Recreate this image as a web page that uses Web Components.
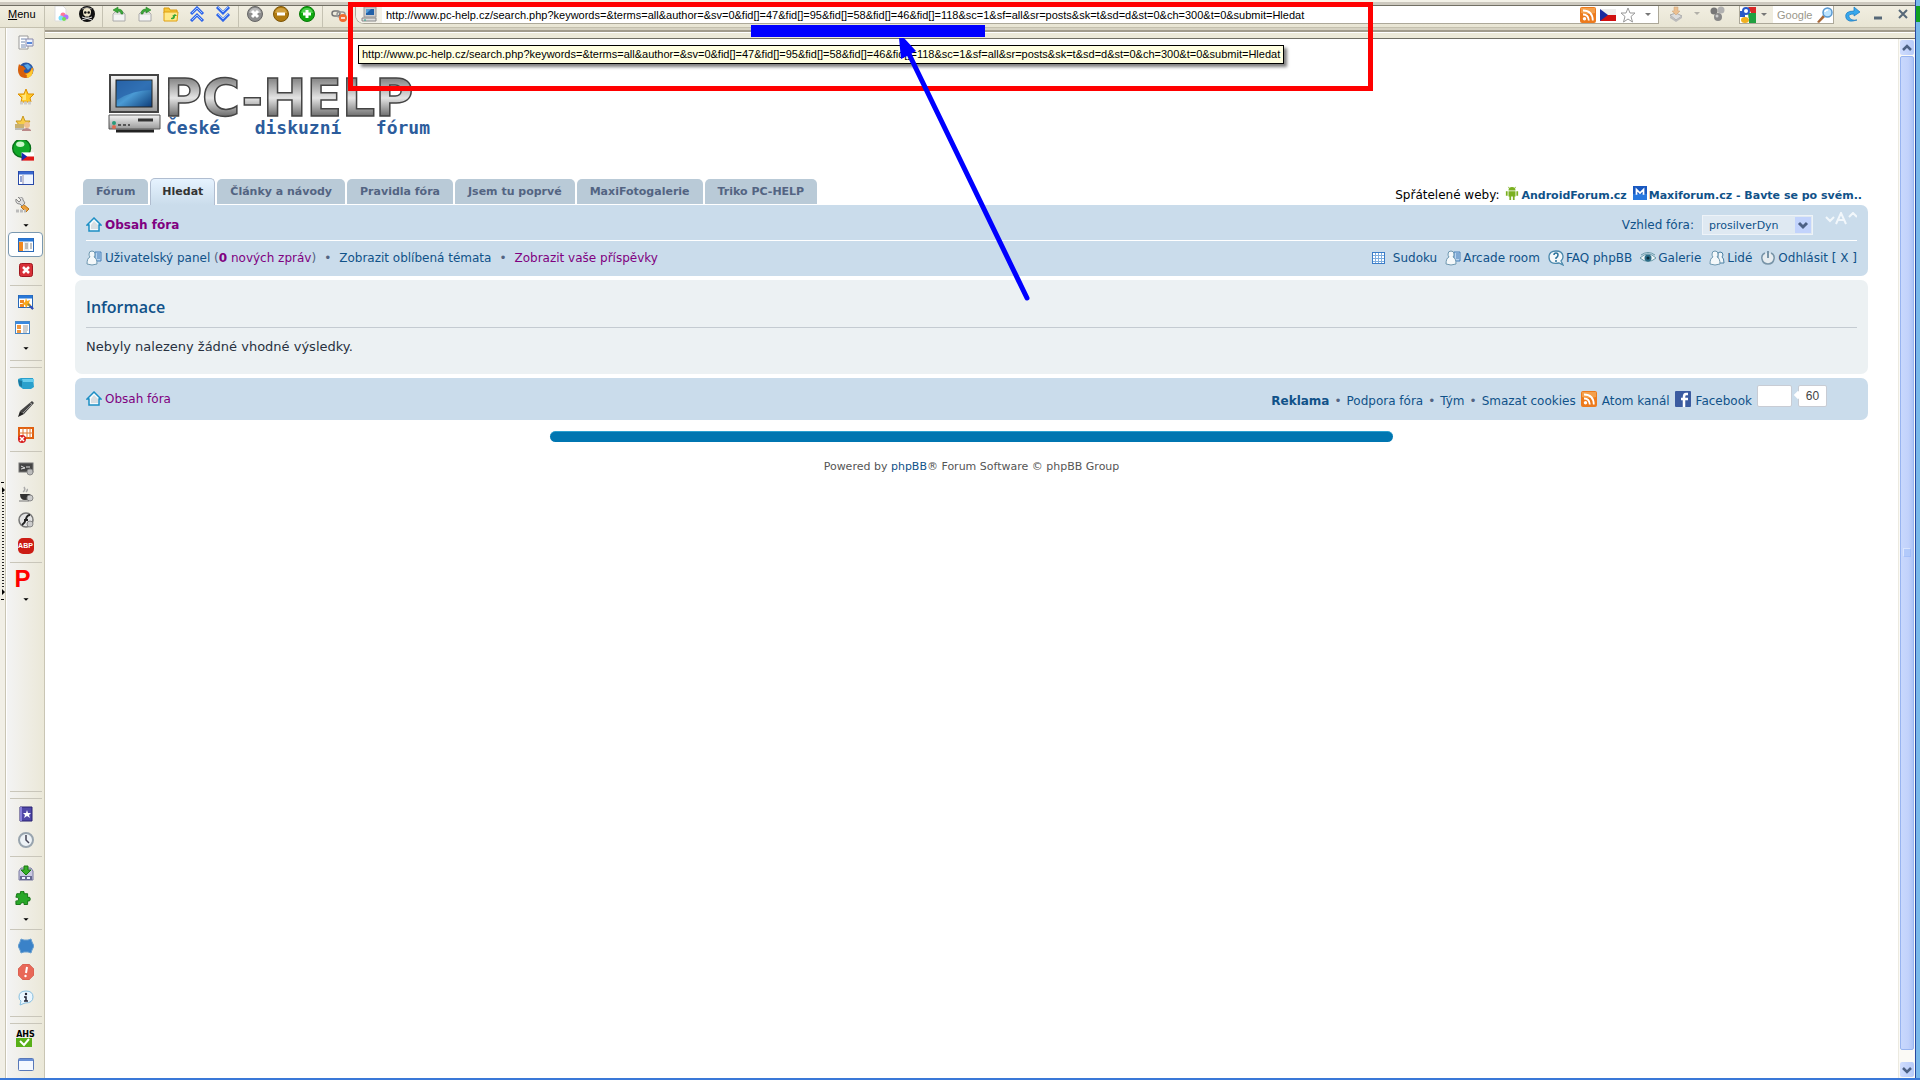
<!DOCTYPE html>
<html lang="cs">
<head>
<meta charset="utf-8">
<title>PC-HELP - Hledat</title>
<style>
  html, body {
    margin: 0;
    background: #fff;
  }

  body {
    font-family: "DejaVu Sans", Verdana, sans-serif;
    font-size: 12px;
    color: #536482;
  }
</style>
</head>
<body>
<browser-window></browser-window>

<script>
/**
 * Icon drawings, all on a 16 x 16 grid.
 */
const ICONS = {
  newpage: '<path d="M2 0h8l3 3v12H2z" fill="#fff" stroke="#ddd"/><circle cx="10" cy="9" r="2.500" fill="#f79"/><circle cx="8" cy="12" r="2.500" fill="#7df"/><circle cx="13" cy="11" r="2.500" fill="#a7f"/><circle cx="11" cy="13" r="2" fill="#7d5"/>',
  skull: '<circle cx="8" cy="8" r="8" fill="#111"/><path d="M3 3q5-3 10 0" stroke="#888" fill="none"/><path d="M4 6q0-4 4-4t4 4q0 3-2 4v2H6v-2Q4 9 4 6z" fill="#eee7cc"/><circle cx="6.300" cy="6.500" r="1.300" fill="#111"/><circle cx="9.700" cy="6.500" r="1.300" fill="#111"/><path d="M7 10v2M9 10v2" stroke="#111"/><path d="M3 11l10 3M13 11L3 14" stroke="#ddd"/>',
  trayleft: '<path d="M2 8l2-2h8l2 2v7H2z" fill="#f4f4f4" stroke="#aaa"/><path d="M3 8h10" stroke="#ccc"/><path d="M12 8Q12 3 7 3V1L2 4l5 3V5q3 0 3 3z" fill="#3aa83a" stroke="#1d7a1d" stroke-width=".5"/>',
  trayright: '<path d="M2 8l2-2h8l2 2v7H2z" fill="#f4f4f4" stroke="#aaa"/><path d="M3 8h10" stroke="#ccc"/><path d="M4 8Q4 3 9 3V1l5 3-5 3V5Q6 5 6 8z" fill="#3aa83a" stroke="#1d7a1d" stroke-width=".5"/>',
  folder: '<path d="M1 2h5l1 2h7v3H1z" fill="#f5c63a" stroke="#d99a10"/><path d="M1 6h14l-1 9H1z" fill="#ffe98a" stroke="#e0a010"/><path d="M8 13q4 1 4-3h2l-2-2-3 2h1q0 2-2 2z" fill="#38a838"/>',
  chevup: '<path d="M2 8l6-6 6 6M2 15l6-6 6 6" fill="none" stroke="#2f66ea" stroke-width="3"/><path d="M3 7l5-5 5 5M3 14l5-5 5 5" fill="none" stroke="#9cc2ff"/>',
  chevdown: '<path d="M2 1l6 6 6-6M2 8l6 6 6-6" fill="none" stroke="#2f66ea" stroke-width="3"/><path d="M3 1l5 5 5-5M3 8l5 5 5-5" fill="none" stroke="#9cc2ff"/>',
  stop: '<circle cx="8" cy="8" r="7.500" fill="#8d8d8d" stroke="#666"/><path d="M2 7Q3 2 8 2t6 5" fill="#bbb"/><path d="M5 5l6 6M11 5l-6 6" stroke="#fff" stroke-width="3"/>',
  minus: '<circle cx="8" cy="8" r="7.500" fill="#b07a10" stroke="#7c5508"/><path d="M2 7Q3 2 8 2t6 5" fill="#d0a040"/><path d="M4 8h8" stroke="#fff" stroke-width="3"/>',
  plus: '<circle cx="8" cy="8" r="7.500" fill="#10a810" stroke="#087808"/><path d="M2 7Q3 2 8 2t6 5" fill="#4fd04f"/><path d="M4 8h8M8 4v8" stroke="#fff" stroke-width="3"/>',
  link: '<rect x="1" y="5" width="8" height="5" rx="2.500" fill="none" stroke="#777" stroke-width="1.500"/><rect x="6" y="6" width="8" height="5" rx="2.500" fill="none" stroke="#999" stroke-width="1.500"/><circle cx="12" cy="12" r="4" fill="#f06a30"/><path d="M10 12h4" stroke="#fff" stroke-width="1.500"/>',
  computer: '<rect x="3" y="0" width="12" height="10" fill="#ccc" stroke="#999"/><rect x="5" y="2" width="8" height="6" fill="#2060a8"/><path d="M5 2h5L6 6H5z" fill="#58a0d8"/><path d="M1 11h14v3H1z" fill="#ddd" stroke="#888"/><path d="M3 13h2" stroke="#2a8"/>',
  rss: '<rect width="16" height="16" rx="2" fill="#ec7a1c"/><path d="M1 1h14v5Q8 8 1 6z" fill="#f4a04c"/><circle cx="4.500" cy="11.800" r="1.700" fill="#fff"/><path d="M3 7.500q5.500 0 5.800 6M3 3.500q9.500 0 9.800 10" stroke="#fff" stroke-width="1.800" fill="none"/>',
  flag: '<path d="M0 2h16v6H0z" fill="#eee"/><path d="M0 8h16v6H0z" fill="#d01010"/><path d="M0 2l8 6-8 6z" fill="#1a2aa0"/>',
  star: '<path d="M8 1l2 5h5l-4 3.500 1.500 5.500L8 12l-4.500 3L5 9.500 1 6h5z" fill="#fff" stroke="#999"/>',
  goldstar: '<path d="M8 0l2 5h6l-4 4 1 4H3l1-4-4-4h6z" fill="#ffc928" stroke="#dc8e00"/><path d="M8 2v9H4l1-3-2-2h4z" fill="#ffe680"/><path d="M2 14h12" stroke="#ccc" stroke-width="3" stroke-dasharray="3 1"/>',
  starman: '<path d="M8 0l2 5h5l-3 4H4L1 5h5z" fill="#f8cc48" stroke="#c89820"/><path d="M0 8h9v4H0z" fill="#c8b070"/><circle cx="12" cy="9" r="3" fill="#f0c090"/><path d="M7 14q5-4 9 0v1H7z" fill="#b88"/><path d="M0 13h9" stroke="#888"/>',
  pages: '<path d="M1 1h9v13H1z" fill="#fff" stroke="#999"/><path d="M3 4h5M3 7h4M3 10h4M3 12h5" stroke="#7088b0"/><path d="M8 4h7v7H8z" fill="#eef4ff" stroke="#88a"/><path d="M9 7h5v2H9z" fill="#5a88d8"/>',
  fox: '<circle cx="8" cy="8" r="7.500" fill="#2858a8"/><path d="M6 3l4-1 3 3-3 3z" fill="#58a8e8"/><path d="M1 2q1 2 4 2l3 3q-3 1-2 3 2 2 5 0l3-4q2-1 1 3-1 7-8 7Q0 15 0 8 0 5 1 2z" fill="#d8600c"/><path d="M7 12q6 0 7-7 3 8-4 11-2-1-1-3z" fill="#ffc830"/>',
  globe: '<circle cx="7" cy="6" r="6.500" fill="#10a828" stroke="#087018"/><ellipse cx="6" cy="3" rx="3" ry="2" fill="#c8f8c8"/><path d="M7 9h9v3H7z" fill="#fff"/><path d="M7 12h9v3H7z" fill="#e01818"/><path d="M7 9l4 3-4 3z" fill="#1828b0"/>',
  panel: '<rect x=".5" y="1.500" width="15" height="13" fill="#fff" stroke="#2848a8"/><path d="M1 3h14" stroke="#3868d0" stroke-width="3"/><path d="M5 5v9" stroke="#88a"/><path d="M2 7h2M2 9h2M2 11h2" stroke="#2848a8"/><path d="M6 5h9v9H6z" fill="#eef4ff"/>',
  wrench: '<path d="M8 7l6 5-3 3-5-5z" fill="#eda03a" stroke="#b87010"/><path d="M1 2l3 3 2-2-3-3q5-1 5 3l2 3-3 3-2-2q-5 0-4-5z" fill="#ddd" stroke="#888"/><path d="M1 14h10" stroke="#bbb" stroke-width="3" stroke-dasharray="3 1"/>',
  layout: '<rect x=".5" y="1.500" width="15" height="13" fill="#fff" stroke="#2868b8"/><path d="M1 3h14" stroke="#2878d8" stroke-width="3"/><path d="M1 5h4v9H1z" fill="#f08820"/><path d="M6 5h5v9H6z" fill="#eee"/><path d="M7 7h3M7 9h3M7 11h3M12 7h2M12 9h2M12 11h2" stroke="#888"/>',
  redx: '<rect x="1.500" y="1.500" width="13" height="13" rx="2" fill="#d83038" stroke="#a01820"/><path d="M5 5l6 6M11 5l-6 6" stroke="#fff" stroke-width="2.500"/>',
  magic: '<rect x=".5" y="1.500" width="14" height="12" fill="#fff" stroke="#2868b8"/><path d="M1 3h13" stroke="#2878d8" stroke-width="3"/><path d="M2 6h4v3H2zM2 10h4v3H2z" fill="#f08820"/><path d="M8 4l1 3 3-1-1 3 2 2-3 0-2 3-1-3-3-1 3-2z" fill="#f8a818"/><path d="M10 10l5 5" stroke="#884" stroke-width="2"/><path d="M12 12l3 3" stroke="#2848c8" stroke-width="2"/>',
  window: '<rect x=".5" y="1.500" width="14" height="12" fill="#fff" stroke="#4888c8"/><path d="M1 3h13" stroke="#3888e0" stroke-width="2"/><path d="M2 5h4v4H2zM2 10h4v3H2z" fill="#f09840"/><path d="M8 6h5M8 8h5M8 10h5M8 12h4" stroke="#999"/>',
  tag: '<path d="M0 4l3-1 12 0 1 9-3 2H5L1 11z" fill="#2aa0cc"/><path d="M4 4h12v3H5z" fill="#68ccec"/><path d="M0 5l4 1v6l-3-2z" fill="#1878a0"/>',
  pen: '<path d="M14 0l2 2L6 13l-4-3z" fill="#444"/><path d="M12 2l2 1L5 12" stroke="#999" fill="none"/><path d="M2 10l4 3-6 3z" fill="#222"/>',
  grid: '<rect x="1" y="1" width="14" height="10" fill="#fff" stroke="#e06010" stroke-width="2"/><path d="M1 6h14M5 1v10M9 1v10M12 1v10" stroke="#e07830"/><circle cx="4" cy="12" r="4" fill="#d82020"/><path d="M2 10l4 4M6 10l-4 4" stroke="#fff" stroke-width="1.500"/>',
  screen: '<rect x="1" y="3" width="14" height="9" fill="#444" stroke="#777"/><path d="M3 6l4 2-4 1M8 7h4" stroke="#ddd" fill="none"/><circle cx="12" cy="12" r="3" fill="#bbb" stroke="#888"/>',
  coffee: '<path d="M2 8h10q0 6-5 6T2 8z" fill="#333"/><path d="M12 9q3 0 1 3" stroke="#555" fill="none"/><path d="M5 6q3-2 1-5M8 6q2-2 1-3" stroke="#aaa" fill="none" stroke-width="1.500"/><circle cx="12" cy="12" r="3" fill="#ccc" stroke="#888"/><path d="M1 15h10" stroke="#777"/>',
  flash: '<circle cx="8" cy="8" r="7" fill="#e4e4e4" stroke="#777" stroke-width="1.500"/><path d="M12 3q-3 0-4 4t-4 6M6 8h4" stroke="#222" stroke-width="2" fill="none"/><circle cx="12" cy="12" r="3" fill="#ccc" stroke="#888"/>',
  google: '<rect width="16" height="16" fill="#fff"/><path d="M8 0h8v6h-5z" fill="#d82828"/><path d="M8 6h8v10H9z" fill="#20a040"/><path d="M0 4h5v6H0z" fill="#2858c8"/><path d="M2 11h7v5H2z" fill="#fff"/><circle cx="6" cy="4" r="3" fill="#fff" stroke="#2858c8" stroke-width="2"/><ellipse cx="5" cy="13" rx="4" ry="3" fill="#f0b020"/>',
  magnifier: '<path d="M0 15l6-7 2 2-6 6z" fill="#a86838"/><circle cx="10.500" cy="5.500" r="4.500" fill="#bce4ff" stroke="#5898d0" stroke-width="1.500"/><path d="M8 5q0-2 3-2" stroke="#fff" stroke-width="1.500" fill="none"/>',
  reload: '<path d="M13 14Q4 17 2 12 0 5 10 5V1l6 5-6 4V8Q4 8 5 11q2 4 8 3z" fill="#38a8ec" stroke="#1878c0" stroke-width=".7"/>',
  min: '<path d="M4 12h8" stroke="#566878" stroke-width="3"/>',
  close: '<path d="M4 4l8 8M12 4l-8 8" stroke="#566878" stroke-width="2"/>',
  stamp: '<path d="M2 9l6-2 6 3-6 4z" fill="#ddd" stroke="#aaa"/><path d="M2 10v2l6 4 6-4v-2l-6 4z" fill="#bbb"/><path d="M6 1h4v4h2L8 9 4 5h2z" fill="#ecc090" stroke="#c8a078" stroke-width=".5"/>',
  balls: '<circle cx="5" cy="5" r="3.500" fill="#777"/><circle cx="12" cy="4" r="3.500" fill="#b0b0b0"/><circle cx="9" cy="11" r="4" fill="#888"/><circle cx="8" cy="10" r="1.500" fill="#ccc"/>',
  book: '<path d="M2 1h12v14H2z" fill="#5048a8" stroke="#282070"/><path d="M2 1h2v14H2z" fill="#8880d8"/><path d="M9 4l1 3h3l-2 2 1 3-3-2-3 2 1-3-2-2h3z" fill="#fff"/>',
  clock: '<circle cx="8" cy="8" r="7" fill="#edf2f6" stroke="#98a4ae" stroke-width="2"/><path d="M8 3v5l3 3" stroke="#445" stroke-width="1.500" fill="none"/>',
  save: '<path d="M1 6l2-3h10l2 3v9H1z" fill="#c8c8e0" stroke="#7878a0"/><path d="M2 11h12v4H2z" fill="#666890"/><path d="M4 12h3v2H4zM9 12h3v2H9z" fill="#eef"/><path d="M6 1h4v4h3L8 10 3 5h3z" fill="#38b028" stroke="#187810"/>',
  puzzle: '<path d="M2 3h4q-1-3 2-3t2 3h4v4q3-1 3 2t-3 2v4h-4q1-3-2-2t-2 2H1v-4q3 1 3-2T1 7z" transform="scale(.9)" fill="#28a828" stroke="#107010"/>',
  badge: '<path d="M3 1l3 1h4l3-1 1 3 2 4-2 4-1 3-3-1H6l-3 1-1-3-2-4 2-4z" fill="#3a82c8" stroke="#6aa0d0"/>',
  warn: '<path d="M5 0h6l5 5v6l-5 5H5l-5-5V5z" fill="#e86858" stroke="#c04838" stroke-width=".5"/><path d="M9 3L8 9" stroke="#fff" stroke-width="2"/><circle cx="7.500" cy="12" r="1.200" fill="#fff"/>',
  info: '<path d="M8 1q7 0 7 6t-8 6l-5 2 1-4q-2-1-2-4 0-6 7-6z" fill="#eaf6ff" stroke="#88c0e0"/><circle cx="8" cy="4" r="1.200" fill="#223"/><path d="M6 7h2v4M6 11h4" stroke="#223" stroke-width="1.500" fill="none"/>',
  blank: '<rect x=".5" y="1.500" width="15" height="12" rx="1" fill="#f4f8ff" stroke="#5878b8"/><path d="M1 3h14" stroke="#6890d8" stroke-width="2"/>',
  home: '<path d="M8 1L1 8h2v6h10V8h2z" fill="#f4fafd" stroke="#1c8ec4" stroke-width="1.500"/><path d="M8 4l4 4v4H5V8z" fill="#d8dee2"/>',
  user: '<path d="M9 2h6v9H9z" fill="#b8d4f0" stroke="#4880b8"/><path d="M11 4h3M11 6h3M11 8h3" stroke="#4880b8"/><path d="M6 1q3 0 3 3 0 2-1 3 3 1 3 7-5 2-10 0 0-6 3-7-1-1-1-3 0-3 3-3z" fill="#f4f8fa" stroke="#6f98b0"/>',
  people: '<path d="M11 2q3 0 3 3l-1 2q2 1 2 6H9V3z" fill="#eef4f8" stroke="#4a80a4"/><path d="M6 1q3 0 3 3 0 2-1 3 3 1 3 7-5 2-10 0 0-6 3-7-1-1-1-3 0-3 3-3z" fill="#f4f8fa" stroke="#6f98b0"/>',
  faq: '<path d="M8 1q7 0 7 6 0 2-2 4l2 4-4-2q-10 2-10-6 0-6 7-6z" fill="#f4f8fa" stroke="#4a88ac" stroke-width="1.300"/><path d="M6 5q0-2 2-2t2 2-2 3v1" stroke="#28709a" stroke-width="1.500" fill="none"/><circle cx="8" cy="11" r="1" fill="#28709a"/>',
  eye: '<path d="M0 8q8-8 16 0-8 7-16 0z" fill="#eef4f6" stroke="#6898a8"/><circle cx="8" cy="8" r="3.500" fill="#2a6c88"/><circle cx="8" cy="8" r="1.500" fill="#0c2c3c"/><path d="M1 5q7-5 14 0" stroke="#6898a8" fill="none"/>',
  power: '<path d="M5 3q-4 2-3 6 1 5 6 5t6-5q1-4-3-6" fill="#e6ecf0" stroke="#7894a8" stroke-width="1.500"/><path d="M8 1v7" stroke="#7894a8" stroke-width="2"/>',
  sudoku: '<rect x="1.500" y="2.500" width="12" height="11" fill="#fff" stroke="#3a7cc8"/><path d="M4.500 3v10M7.500 3v10M10.500 3v10M2 5.500h11M2 8.500h11M2 11.500h11" stroke="#7eaee0"/>',
  android: '<path d="M4 6h8v6H4zM4 5q0-4 4-4t4 4zM5 12h2v4H5zM9 12h2v4H9zM1 6h2v5H1zM13 6h2v5h-2z" fill="#7ab020"/><path d="M4 1l1 2M12 1l-1 2" stroke="#7ab020"/>',
  maxi: '<rect width="16" height="16" fill="#1858c0"/><path d="M0 9h16v7H0z" fill="#2878e0"/><path d="M4 10V4l4 4 4-4v6" fill="none" stroke="#fff" stroke-width="2"/>',
  facebook: '<rect width="16" height="16" rx="1" fill="#3b5ba0"/><path d="M13 3h-2q-2 0-2 3v10M6 8h7" fill="none" stroke="#fff" stroke-width="2.500"/>',
  caret: '<path d="M5 7h6l-3 3z" fill="#000"/>',
  greycaret: '<path d="M5 6h6l-3 3z" fill="#777"/>'
}

/**
 * A 16 pixel icon, picked by its name attribute.
 */
customElements.define('app-icon', class extends HTMLElement {
  constructor () {
    super()
    this.attachShadow({ mode: 'open' })
  }

  connectedCallback () {
    this.shadowRoot.innerHTML = `
      <style>
        :host { display: inline-block; width: 16px; height: 16px; flex: none; vertical-align: middle; white-space: normal; }
        svg { display: block; width: 100%; height: 100%; }
      </style>
      <svg viewBox="0 0 16 16" aria-hidden="true">${ICONS[this.getAttribute('name')]}</svg>`
  }
})

/**
 * A flat toolbar button that holds one icon or a short text.
 */
customElements.define('tool-button', class extends HTMLElement {
  constructor () {
    super()
    this.attachShadow({ mode: 'open' })
  }

  connectedCallback () {
    const icon = this.getAttribute('icon')
    this.shadowRoot.innerHTML = `
      <style>
        :host { display: block; flex: none; width: 26px; height: 26px; }
        button {
          display: flex; align-items: center; justify-content: center;
          box-sizing: border-box; width: 100%; height: 100%;
          margin: 0; padding: 0; border: 0; background: none; font: inherit; color: inherit;
        }
        :host([active]) button { background: #fff; border: 1px solid #7a98b0; border-radius: 4px; }
        :host([big]) app-icon { width: 22px; height: 22px; }
      </style>
      <button type="button" aria-label="${this.getAttribute('label') || icon}">
        ${icon ? `<app-icon name="${icon}"></app-icon>` : '<slot></slot>'}
      </button>`
  }
})

/**
 * Top toolbar with the address and search fields.
 */
customElements.define('browser-toolbar', class extends HTMLElement {
  constructor () {
    super()
    this.attachShadow({ mode: 'open' }).innerHTML = `
      <style>
        :host {
          display: block;
          font: 11px "Liberation Sans", Tahoma, sans-serif;
          color: #000;
        }
        .edge { height: 2px; background: #f4f2e8; border-bottom: 3px solid #cdc9bf; }
        .bar {
          display: flex; height: 21px; padding-left: 8px;
          border-top: 1px solid #716f64; border-bottom: 1px solid #c4c0ae;
          background: linear-gradient(#f1eee1, #e8e5d4);
        }
        .menu { width: 34px; height: 16px; padding: 0; border: 0; background: none; font: inherit; line-height: 16px; text-align: left; }
        .sep { width: 1px; background: #c5c2b2; margin: 0 3px 0 2px; }
        tool-button { height: 15px; }
        .address, .search {
          display: flex; align-items: center; box-sizing: border-box; height: 18px;
          background: #fff; border: 1px solid #aca899; border-top: 0;
        }
        .address { flex: 1; gap: 4px; margin: 0 4px 0 3px; padding-right: 2px; border-radius: 0 0 0 9px; overflow: hidden; }
        .site { display: flex; width: 26px; height: 100%; align-items: center; justify-content: center; background: #f3f1e8; }
        input { min-width: 0; flex: 1; padding: 0; border: 0; background: none; font: inherit; color: #000; }
        .search { width: 95px; margin: 0 5px 0 9px; }
        .engine { display: flex; height: 100%; align-items: center; background: #efecdf; width: 33px; }
        .search input { padding-left: 4px; }
        .search input::placeholder { color: #9a978a; opacity: 1; }
        .dim { opacity: .5; width: 15px; }
        .end { width: 24px; }
      </style>
      <div class="edge"></div>
      <div class="bar">
        <button class="menu" type="button"><u>M</u>enu</button><span class="sep"></span>
        <tool-button icon="newpage"></tool-button><tool-button icon="skull"></tool-button><span class="sep"></span>
        <tool-button icon="trayleft"></tool-button><tool-button icon="trayright"></tool-button><tool-button icon="folder"></tool-button><tool-button icon="chevup"></tool-button><tool-button icon="chevdown"></tool-button><span class="sep"></span>
        <tool-button icon="stop"></tool-button><tool-button icon="minus"></tool-button><tool-button icon="plus"></tool-button><span class="sep"></span>
        <tool-button icon="link"></tool-button>
        <div class="address">
          <span class="site"><app-icon name="computer"></app-icon></span>
          <input type="text" aria-label="Adresa" value="http://www.pc-help.cz/search.php?keywords=&amp;terms=all&amp;author=&amp;sv=0&amp;fid[]=47&amp;fid[]=95&amp;fid[]=58&amp;fid[]=46&amp;fid[]=118&amp;sc=1&amp;sf=all&amp;sr=posts&amp;sk=t&amp;sd=d&amp;st=0&amp;ch=300&amp;t=0&amp;submit=Hledat">
          <app-icon name="rss"></app-icon><app-icon name="flag"></app-icon><app-icon name="star"></app-icon><app-icon name="greycaret"></app-icon>
        </div>
        <tool-button icon="stamp"></tool-button><tool-button icon="greycaret" class="dim"></tool-button><tool-button icon="balls"></tool-button>
        <div class="search">
          <span class="engine"><app-icon name="google"></app-icon><app-icon name="greycaret"></app-icon></span>
          <input type="text" aria-label="Vyhledat" placeholder="Google">
          <app-icon name="magnifier"></app-icon>
        </div>
        <tool-button icon="reload"></tool-button><tool-button icon="min"></tool-button><tool-button icon="close" class="end"></tool-button>
      </div>`
  }
})

/**
 * Vertical toolbar on the left, with the splitter beside it.
 */
customElements.define('side-toolbar', class extends HTMLElement {
  constructor () {
    super()
    this.attachShadow({ mode: 'open' }).innerHTML = `
      <style>
        :host { display: flex; flex: none; }
        .splitter {
          display: flex; flex-direction: column; align-items: center;
          width: 5px; border-right: 1px solid #c9c5b4; background: #f1efe6;
        }
        .splitter::before { content: ""; flex: 454; }
        .splitter::after { content: ""; flex: 478; }
        .grip { flex: 96; width: 2px; background: repeating-linear-gradient(#222 0 1px, #f1efe6 1px 3px); }
        .splitter svg { display: block; width: 5px; height: 11px; }
        nav {
          display: flex; flex-direction: column; width: 39px; padding-top: 2px; box-sizing: border-box;
          border-left: 1px solid #fff; border-right: 1px solid #c9c5b4;
          background: linear-gradient(90deg, #f3f3f3, #ebe8d8);
        }
        .group { display: flex; flex-direction: column; align-items: center; }
        .first { gap: 1px; }
        .drop { margin-right: 6px; }
        .caret { width: 14px; height: 14px; }
        .pick tool-button { height: 25px; }
        .pick tool-button[active] { width: 35px; }
        hr { flex: none; width: 32px; height: 1px; margin: 3px auto; border: 0; background: #c9c6ba; }
        hr.double { height: 6px; margin: 5px auto 2px; background: none; border: solid #c9c6ba; border-width: 1px 0; }
        .spacer { flex: 1; }
        .p { font: bold 24px "Liberation Sans", Arial, sans-serif; color: #f00; }
        .ahs { display: flex; flex-direction: column; font: bold 8px "DejaVu Sans", sans-serif; color: #000; line-height: 7px; }
        .tick { display: block; width: 16px; height: 9px; background: #58b018; }
        .abp { width: 16px; height: 16px; border-radius: 5px; background: #cc1c14; color: #fff; font: bold 7px "Liberation Sans", Arial, sans-serif; line-height: 16px; }
      </style>
      <div class="splitter">
        <svg viewBox="0 0 5 11"><path d="M1 0h3v1H1zM2 5l3 3-3 3z"/></svg>
        <div class="grip"></div>
        <svg viewBox="0 0 5 11"><path d="M1 10h3v1H1zM2 0l3 3-3 3z"/></svg>
      </div>
      <nav aria-label="Panel nástrojů">
        <div class="group first">
          <tool-button icon="pages"></tool-button>
          <tool-button icon="fox"></tool-button>
          <tool-button icon="goldstar"></tool-button>
          <tool-button icon="starman" class="drop"></tool-button>
          <tool-button icon="globe" big class="drop"></tool-button>
          <tool-button icon="panel"></tool-button>
          <tool-button icon="wrench" class="drop"></tool-button>
        </div>
        <div class="group pick">
          <app-icon name="caret" class="caret"></app-icon>
          <tool-button icon="layout" active></tool-button>
          <tool-button icon="redx"></tool-button>
        </div>
        <hr>
        <div class="group">
          <tool-button icon="magic"></tool-button>
          <tool-button icon="window" class="drop"></tool-button>
          <app-icon name="caret" class="caret"></app-icon>
        </div>
        <hr class="double">
        <div class="group">
          <tool-button icon="tag"></tool-button>
          <tool-button icon="pen"></tool-button>
          <tool-button icon="grid"></tool-button>
        </div>
        <hr>
        <div class="group">
          <tool-button icon="screen"></tool-button>
          <tool-button icon="coffee"></tool-button>
          <tool-button icon="flash"></tool-button>
          <tool-button label="ABP"><span class="abp">ABP</span></tool-button>
        </div>
        <hr>
        <div class="group">
          <tool-button label="P" class="drop"><span class="p">P</span></tool-button>
          <app-icon name="caret" class="caret"></app-icon>
        </div>
        <div class="spacer"></div>
        <hr class="double">
        <div class="group">
          <tool-button icon="book"></tool-button>
          <tool-button icon="clock"></tool-button>
        </div>
        <hr>
        <div class="group">
          <tool-button icon="save"></tool-button>
          <tool-button icon="puzzle" class="drop"></tool-button>
          <app-icon name="caret" class="caret"></app-icon>
        </div>
        <hr>
        <div class="group">
          <tool-button icon="badge"></tool-button>
          <tool-button icon="warn"></tool-button>
          <tool-button icon="info"></tool-button>
        </div>
        <hr class="double">
        <div class="group">
          <tool-button label="AHS"><span class="ahs">AHS<svg class="tick" viewBox="0 0 16 9"><path d="M4 3l4 4 5-6" fill="none" stroke="#fff" stroke-width="2"/></svg></span></tool-button>
          <tool-button icon="blank"></tool-button>
        </div>
      </nav>`
  }
})

/**
 * Site logo: the computer and the name beside it.
 */
customElements.define('site-logo', class extends HTMLElement {
  constructor () {
    super()
    this.attachShadow({ mode: 'open' }).innerHTML = `
      <style>
        :host { display: block; }
        a { display: flex; gap: 5px; text-decoration: none; color: #2c5c9c; }
        .pc { display: block; width: 53px; height: 59px; }
        .name { width: 264px; }
        .title { display: block; width: 264px; height: 46px; overflow: visible; }
        .sub { display: flex; justify-content: space-between; font: bold 18px "DejaVu Sans Mono", monospace; line-height: 16px; }
      </style>
      <a href="#">
        <svg class="pc" viewBox="0 0 53 59" aria-hidden="true">
          <defs>
            <linearGradient id="case" x2="0" y2="1"><stop stop-color="#f4f4f4"/><stop offset="1" stop-color="#9a9a9a"/></linearGradient>
            <linearGradient id="glass" x2="1" y2="1"><stop stop-color="#1d4f8c"/><stop offset=".5" stop-color="#4a9ad4"/><stop offset="1" stop-color="#0e3c78"/></linearGradient>
          </defs>
          <rect x="2" y="1" width="48" height="37" fill="url(#case)" stroke="#444" stroke-width="2"/>
          <rect x="8" y="6" width="36" height="27" fill="url(#glass)" stroke="#222"/>
          <path d="M9 7h34v9q-18 0-34 10z" fill="#2a67ac" opacity=".8"/>
          <path d="M1 41h51v14H1z" fill="url(#case)" stroke="#555"/>
          <path d="M30 46h15" stroke="#333" stroke-width="3"/>
          <path d="M10 51h12" stroke="#555" stroke-width="2" stroke-dasharray="3 2"/>
          <circle cx="6" cy="49" r="2" fill="#2a9a7a"/><circle cx="6" cy="53" r="2" fill="#e06a50"/>
          <path d="M8 57h38" stroke="#222" stroke-width="3"/>
        </svg>
        <span class="name">
          <svg class="title" viewBox="0 0 264 46">
            <defs><linearGradient id="metal" x2="0" y2="1"><stop offset=".2" stop-color="#8c8c8c"/><stop offset=".5" stop-color="#e4e4e4"/><stop offset=".8" stop-color="#6e6e6e"/></linearGradient></defs>
            <text x="-2" y="42" font-family="DejaVu Sans" font-weight="bold" font-size="52" fill="url(#metal)" stroke="#444" stroke-width="1.500">PC-HELP</text>
          </svg>
          <span class="sub"><span>České</span><span>diskuzní</span><span>fórum</span></span>
        </span>
      </a>`
  }
})

/**
 * One tab of the forum navigation.
 */
customElements.define('forum-tab', class extends HTMLElement {
  constructor () {
    super()
    this.attachShadow({ mode: 'open' }).innerHTML = `
      <style>
        :host { display: block; }
        a {
          display: block; padding: 0 13px; line-height: 25px;
          border-radius: 5px 5px 0 0; background: #b9cad7;
          font-size: 11px; font-weight: bold; color: #536482; text-decoration: none;
        }
        :host([active]) a {
          margin-top: -1px; padding: 0 11px 1px;
          border: 1px solid #b0bdd0; border-bottom: 0;
          background: linear-gradient(#e6f3ff, #cadceb); color: #333;
        }
      </style>
      <a href="#"><slot></slot></a>`
  }
})

/**
 * Rounded panel that holds the forum content.
 */
customElements.define('forum-panel', class extends HTMLElement {
  constructor () {
    super()
    this.attachShadow({ mode: 'open' }).innerHTML = `
      <style>
        :host { display: block; padding: 0 11px; border-radius: 7px; background: #cadceb; }
        :host([light]) { background: #ecf1f3; }
      </style>
      <slot></slot>`
  }
})

/**
 * The forum page itself.
 */
customElements.define('forum-page', class extends HTMLElement {
  constructor () {
    super()
    this.attachShadow({ mode: 'open' }).innerHTML = `
      <style>
        :host { display: block; flex: 1; min-width: 0; padding: 0 30px; background: #fff; }
        a { color: #105289; text-decoration: none; }
        a.seen { color: #800080; }
        header { padding: 35px 33px 0; height: 105px; }
        .top { display: flex; align-items: flex-start; justify-content: space-between; height: 26px; padding: 0 6px 0 8px; }
        .tabs { display: flex; gap: 2px; }
        .friends { display: flex; align-items: center; height: 32px; color: #000; font-size: 12px; }
        .friends a { font-size: 11px; font-weight: bold; }
        .friends app-icon { width: 14px; height: 14px; margin: 0 2px 4px 6px; }
        .row { display: flex; justify-content: space-between; align-items: center; box-sizing: border-box; height: 36px; padding-bottom: 2px; }
        .row.crumbs { height: 35px; padding: 5px 0 0; }
        .row + .row { border-top: 1px solid #fff; }
        .crumb { display: flex; align-items: center; gap: 3px; }
        .left, .right { display: flex; align-items: center; gap: 8px; }
        .panel { display: flex; align-items: center; gap: 3px; }
        .right a { display: flex; align-items: center; gap: 2px; white-space: nowrap; }
        .skin { position: relative; display: block; }
        select {
          appearance: none; display: block; box-sizing: border-box; width: 111px; height: 20px; margin: 0; padding: 0 20px 0 6px;
          border: 1px solid #eef3f8; border-radius: 0; background: #dfe9f2; font: inherit; font-size: 11px; color: #105289;
        }
        .arrow { position: absolute; top: 2px; right: 2px; width: 16px; height: 16px; background: #c2d3fc; pointer-events: none; }
        .size { width: 32px; height: 14px; margin: 0 0 12px 4px; }
        .info { margin: 4px 0; padding-bottom: 17px; }
        h2 { margin: 0; padding: 16px 0 9px; border-bottom: 1px solid #c4cbd1; font: bold 16px "Open Sans", "Trebuchet MS", sans-serif; line-height: 22px; font-weight: 600; color: #105289; }
        p { margin: 9px 0 0; font-size: 13px; line-height: 20px; color: #28313f; }
        .foot { display: flex; align-items: center; justify-content: space-between; height: 42px; }
        .foot .right { gap: 5px; padding: 4px 30px 0 0; }
        .foot .right app-icon { margin-top: -4px; }
        .like, .count { box-sizing: border-box; height: 22px; background: #fff; border: 1px solid #c8ccd4; border-radius: 2px; margin-bottom: 10px; }
        .like { width: 35px; }
        .count { position: relative; width: 29px; margin-left: 1px; text-align: center; line-height: 20px; font-family: "Liberation Sans", Arial, sans-serif; color: #444; }
        .count::before { content: ""; position: absolute; left: -4px; top: 6px; width: 6px; height: 6px; background: #fff; transform: rotate(45deg); }
        .bar { width: 47%; height: 10px; margin: 11px auto 17px; border-top: 1px solid #2aa0d0; border-radius: 6px; background: #0076b1; }
        small { display: block; text-align: center; font-size: 11px; line-height: 16px; color: #555; }
      </style>
      <header><site-logo></site-logo></header>
      <div class="top">
        <nav class="tabs">
          <forum-tab>Fórum</forum-tab>
          <forum-tab active>Hledat</forum-tab>
          <forum-tab>Články a návody</forum-tab>
          <forum-tab>Pravidla fóra</forum-tab>
          <forum-tab>Jsem tu poprvé</forum-tab>
          <forum-tab>MaxiFotogalerie</forum-tab>
          <forum-tab>Triko PC-HELP</forum-tab>
        </nav>
        <div class="friends">Spřátelené weby: <app-icon name="android"></app-icon><a href="#">AndroidForum.cz</a><app-icon name="maxi"></app-icon><a href="#">Maxiforum.cz - Bavte se po svém..</a></div>
      </div>
      <forum-panel>
        <div class="row crumbs">
          <span class="crumb"><app-icon name="home"></app-icon><a class="seen" href="#"><b>Obsah fóra</b></a></span>
          <div class="right">
            <label for="skin"><a>Vzhled fóra:</a></label>
            <span class="skin">
              <select id="skin"><option>prosilverDyn</option></select>
              <svg class="arrow" viewBox="0 0 16 16"><path d="M4 6l4 4 4-4" fill="none" stroke="#4d6185" stroke-width="3"/></svg>
            </span>
            <svg class="size" viewBox="0 0 32 14"><path d="M1 5l4 4 4-4M24 5l4-4 4 4M11 12l5-11 5 11M13 8h6" fill="none" stroke="#f2f7fb" stroke-width="2"/></svg>
          </div>
        </div>
        <div class="row">
          <div class="left">
            <span class="panel"><app-icon name="user"></app-icon><span><a href="#">Uživatelský panel</a> (<a class="seen" href="#"><b>0</b> nových zpráv</a>)</span></span>•
            <a href="#">Zobrazit oblíbená témata</a>•
            <a class="seen" href="#">Zobrazit vaše příspěvky</a>
          </div>
          <div class="right">
            <a href="#"><app-icon name="sudoku"></app-icon>&nbsp;Sudoku</a>
            <a href="#"><app-icon name="user"></app-icon>Arcade room</a>
            <a href="#"><app-icon name="faq"></app-icon>FAQ phpBB</a>
            <a href="#"><app-icon name="eye"></app-icon>Galerie</a>
            <a href="#"><app-icon name="people"></app-icon>Lidé</a>
            <a href="#"><app-icon name="power"></app-icon>Odhlásit [ X ]</a>
          </div>
        </div>
      </forum-panel>
      <forum-panel light class="info">
        <h2>Informace</h2>
        <p>Nebyly nalezeny žádné vhodné výsledky.</p>
      </forum-panel>
      <forum-panel>
        <div class="foot">
          <span class="crumb"><app-icon name="home"></app-icon><a class="seen" href="#">Obsah fóra</a></span>
          <div class="right">
            <a href="#"><b>Reklama</b></a>•<a href="#">Podpora fóra</a>•<a href="#">Tým</a>•<a href="#">Smazat cookies</a>
            <app-icon name="rss"></app-icon><a href="#">Atom kanál</a>
            <app-icon name="facebook"></app-icon><a href="#">Facebook</a>
            <span class="like"></span><span class="count">60</span>
          </div>
        </div>
      </forum-panel>
      <div class="bar"></div>
      <small>Powered by <a href="#">phpBB</a>® Forum Software © phpBB Group</small>`
  }
})

/**
 * Scroll bar of the page area.
 */
customElements.define('scroll-bar', class extends HTMLElement {
  constructor () {
    super()
    this.attachShadow({ mode: 'open' }).innerHTML = `
      <style>
        :host {
          display: flex; flex-direction: column; flex: none; box-sizing: border-box; width: 17px; padding: 1px;
          border-left: 1px solid #eceae0; background: #fbfaf6;
        }
        button { height: 15px; padding: 0; border: 0; border-radius: 2px; background: linear-gradient(90deg, #d0ddfe, #b8cbf8); }
        svg { display: block; margin: auto; width: 10px; height: 10px; }
        .track { flex: 1; padding: 1px 0 12px; display: flex; }
        .thumb {
          display: flex; align-items: center; flex: 1; box-sizing: border-box; border: 1px solid #98b4f0; border-radius: 2px;
          background: linear-gradient(90deg, #c8d8fd, #c2d2fb 60%, #aec4f6);
        }
      </style>
      <button type="button" aria-label="Nahoru"><svg viewBox="0 0 10 10"><path d="M1 7l4-4 4 4" fill="none" stroke="#4d6185" stroke-width="2.500"/></svg></button>
      <div class="track"><div class="thumb"><svg viewBox="0 0 10 10"><path d="M1 1h7M1 3h7M1 5h7M1 7h7" stroke="#eef4fe"/><path d="M2 2h7M2 4h7M2 6h7M2 8h7" stroke="#8cb0f8"/></svg></div></div>
      <button type="button" aria-label="Dolů"><svg viewBox="0 0 10 10"><path d="M1 3l4 4 4-4" fill="none" stroke="#4d6185" stroke-width="2.500"/></svg></button>`
  }
})

/**
 * Hand drawn marks and the address tooltip, laid over the window.
 */
customElements.define('screen-marks', class extends HTMLElement {
  constructor () {
    super()
    this.attachShadow({ mode: 'open' }).innerHTML = `
      <style>
        :host { position: absolute; top: 0; left: 0; pointer-events: none; }
        .tip {
          position: absolute; left: 358px; top: 45px; padding: 0 3px; border: 1px solid #000;
          background: #ffffe1; box-shadow: 3px 3px 3px rgba(0, 0, 0, .5);
          font: 11px "Liberation Sans", Tahoma, sans-serif; line-height: 17px; color: #000; white-space: nowrap;
        }
        svg { position: absolute; top: 0; left: 0; width: 1400px; height: 320px; }
      </style>
      <div class="tip" role="tooltip">http://www.pc-help.cz/search.php?keywords=&amp;terms=all&amp;author=&amp;sv=0&amp;fid[]=47&amp;fid[]=95&amp;fid[]=58&amp;fid[]=46&amp;fid[]=118&amp;sc=1&amp;sf=all&amp;sr=posts&amp;sk=t&amp;sd=d&amp;st=0&amp;ch=300&amp;t=0&amp;submit=Hledat</div>
      <svg viewBox="0 0 1400 320" aria-hidden="true">
        <rect x="350.500" y="4.500" width="1020" height="84" fill="none" stroke="#f00" stroke-width="5"/>
        <path d="M751 25h234v12H751zM899 38h5l12 13-7 4-8 4z" fill="#00f"/>
        <path d="M908 52l119 246" stroke="#00f" stroke-width="5" stroke-linecap="round"/>
      </svg>`
  }
})

/**
 * The whole browser window.
 */
customElements.define('browser-window', class extends HTMLElement {
  constructor () {
    super()
    this.attachShadow({ mode: 'open' }).innerHTML = `
      <style>
        :host { position: relative; display: flex; box-sizing: border-box; min-height: 100vh; border-bottom: 2px solid #3a78d8; }
        .main { display: flex; flex-direction: column; flex: 1; min-width: 0; }
        .body { display: flex; flex: 1; }
        .view { display: flex; flex-direction: column; flex: 1; min-width: 0; }
        .strip { height: 8px; border-top: 2px solid #d6d2c2; background: #ece9d8; border-bottom: 1px solid #716f64; }
        .strip::before { content: ""; display: block; height: 2px; background: #a19b8b; border-bottom: 1px solid #fff; }
        .page { display: flex; flex: 1; }
        .frame { width: 4px; border-left: 1px solid #2848a0; background: #78b8ea; }
        .frame::before { content: ""; display: block; height: 16px; margin-top: 6px; background: #10a020; }
      </style>
      <div class="main">
        <browser-toolbar></browser-toolbar>
        <div class="body">
          <side-toolbar></side-toolbar>
          <div class="view">
            <div class="strip"></div>
            <div class="page"><forum-page></forum-page><scroll-bar></scroll-bar></div>
          </div>
        </div>
      </div>
      <div class="frame"></div>
      <screen-marks></screen-marks>`
  }
})
</script>
</body>
</html>
